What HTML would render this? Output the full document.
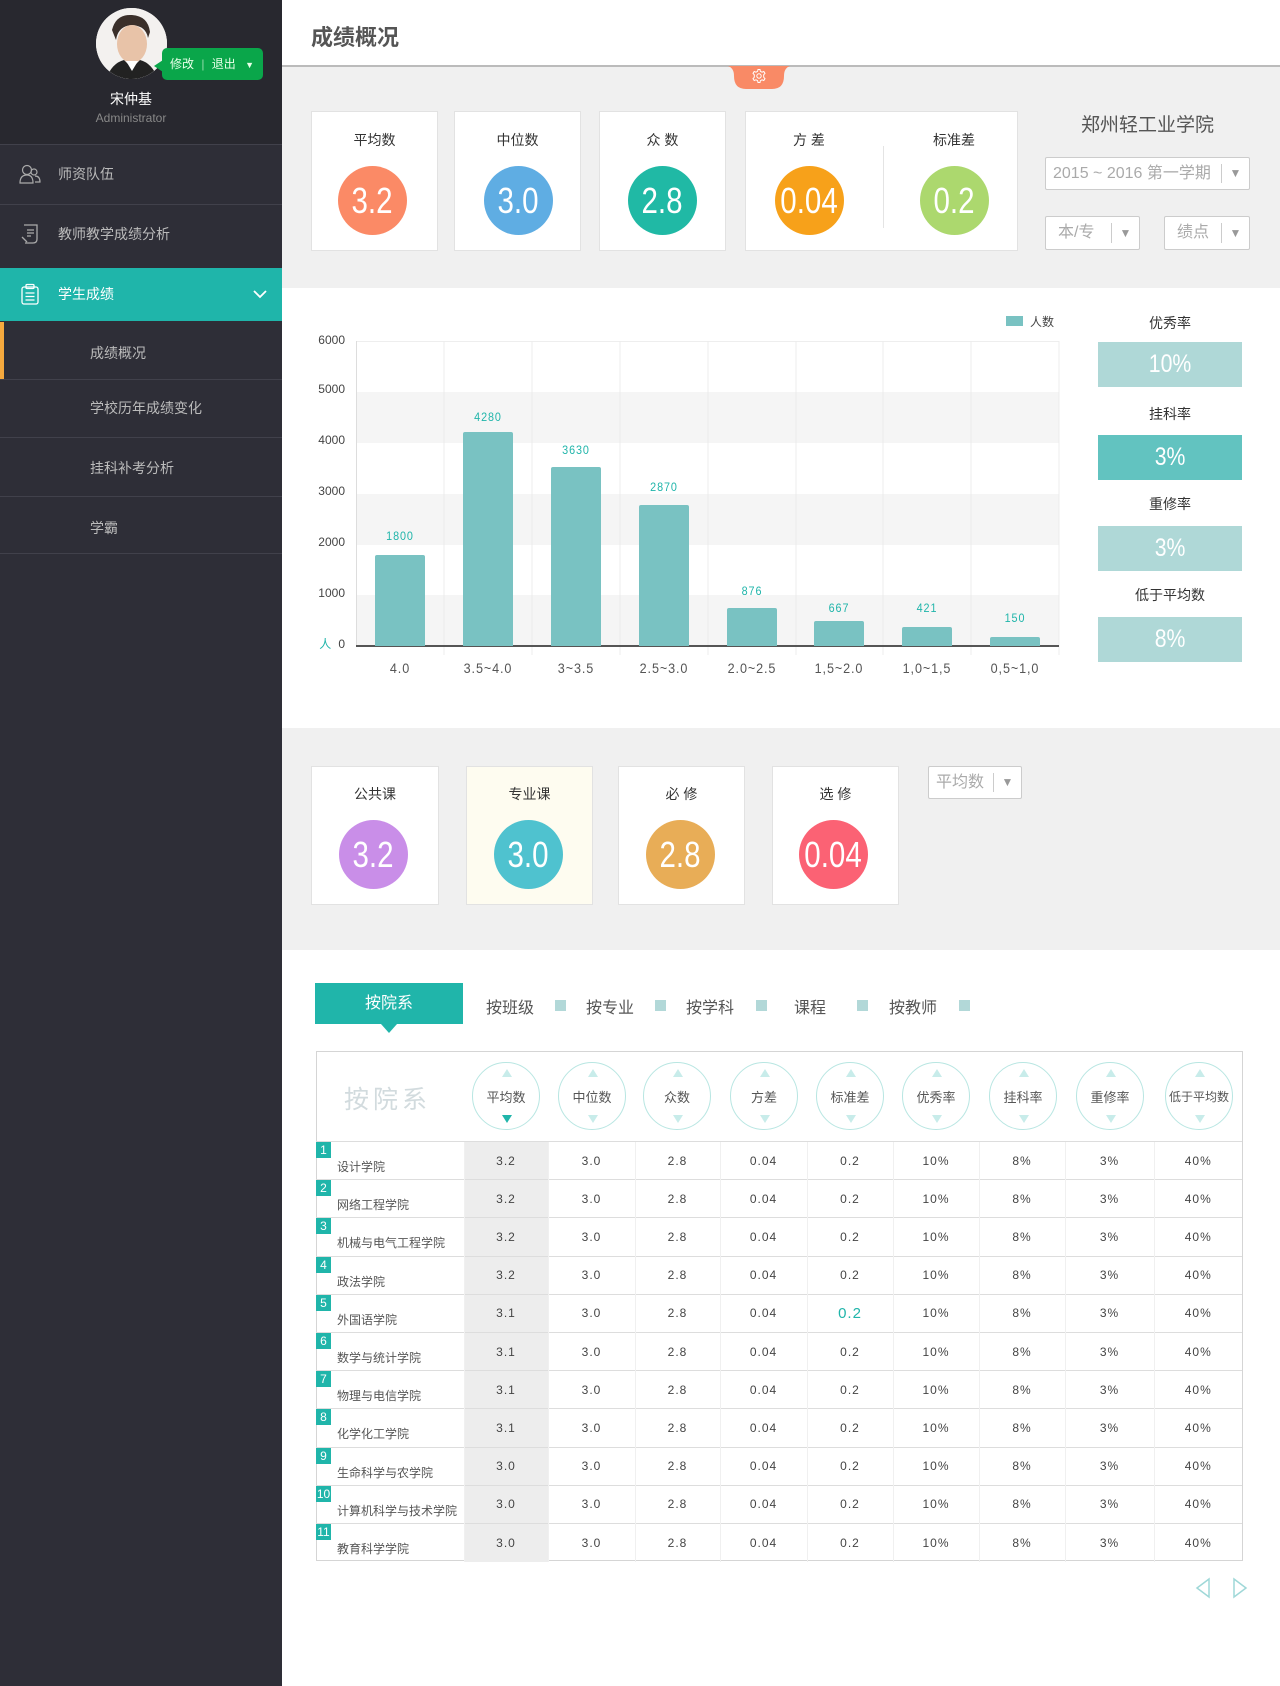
<!DOCTYPE html>
<html><head><meta charset="utf-8">
<style>
*{margin:0;padding:0;box-sizing:border-box}
body{width:1280px;height:1686px;position:relative;background:#fff;font-family:"Liberation Sans","Noto Sans CJK SC",sans-serif;color:#444;overflow:hidden}
.a{position:absolute}
.c{text-align:center}
.sb{left:0;top:0;width:282px;height:1686px;background:#2e2e37}
.num{color:#fff;font-size:36px;display:flex;align-items:center;justify-content:center;border-radius:50%}
.num span{display:inline-block;transform:scaleX(.82);font-family:"Liberation Sans",sans-serif}
.card{background:#fff;border:1px solid #e2e2e2}
.lbl{font-size:14px;color:#333;width:100%;text-align:center}
.sel{background:#fff;border:1px solid #ccc;border-radius:2px;color:#aaa;font-size:16px}
.sel .ar{position:absolute;right:0;top:6px;bottom:6px;width:28px;border-left:1px solid #ccc;color:#999;font-size:12px;display:flex;align-items:center;justify-content:center}
.menu{left:58px;font-size:14px;color:#bbb}
.ln{left:0;width:282px;height:1px;background:#41414b}
.yl{font-size:12px;color:#444;width:40px;text-align:right;left:305px}
.bar{background:#79c2c2;width:50px;border-radius:2px 2px 0 0}
.bv{font-size:12px;color:#20b5aa;width:80px;text-align:center;letter-spacing:1px;transform:scaleX(.9)}
.xl{font-size:14px;color:#555;width:88px;text-align:center;top:660px;letter-spacing:1px;transform:scaleX(.9)}
.rt{left:1098px;width:144px;text-align:center;font-size:14px;color:#333}
.rb{left:1098px;width:144px;height:45px;color:#fff;font-size:25px;display:flex;align-items:center;justify-content:center}
.rb span{display:inline-block;transform:scaleX(.85)}
.tab{font-size:16px;color:#555;top:994px}
.sq{width:11px;height:11px;background:#b2d8d8;top:1000px}
.hc{width:68px;height:68px;border:1px solid #b8e6e2;border-radius:50%;top:1062px;font-size:13px;color:#555;display:flex;align-items:center;justify-content:center}
.hc:before{content:"";position:absolute;top:6px;left:29px;border:5px solid transparent;border-bottom:8px solid #c8ecea;border-top:0}
.hc:after{content:"";position:absolute;bottom:6px;left:29px;border:5px solid transparent;border-top:8px solid #c8ecea;border-bottom:0}
.hc.on:after{border-top-color:#20b5aa}
table{border-collapse:collapse;position:absolute;left:316px;top:1141px;width:926px}
td{height:38.2px;border-top:1px solid #ddd;border-left:1px solid #f0f0f0;font-size:12px;color:#444;text-align:center;letter-spacing:1px;padding:0}
td.n{text-align:left;position:relative;border-left:0;letter-spacing:0;color:#555}
td.n b{position:absolute;left:0;top:0;background:#20b5aa;color:#fff;font-weight:normal;font-size:12px;min-width:15px;height:16px;line-height:16px;text-align:center}
td.n span{position:absolute;left:21px;top:16px;font-size:12px}
td.g{background:#ededed}
</style></head><body>

<div class="a sb"></div>
<div class="a" style="left:0;top:0;width:282px;height:144px;background:#28282f"></div>
<div class="a" style="left:96px;top:8px;width:71px;height:71px;border-radius:50%;background:#fff;overflow:hidden">
<svg width="71" height="71" viewBox="0 0 71 71"><rect width="71" height="71" fill="#f3f1ef"/><path d="M16 22 Q20 6 36 7 Q52 8 54 24 L52 30 Q50 18 36 17 Q22 18 20 32Z" fill="#3a2f2a"/><ellipse cx="36" cy="36" rx="15" ry="19" fill="#e8c3a8"/><path d="M10 71 Q16 55 28 52 L36 60 L44 52 Q56 55 62 71Z" fill="#222"/><path d="M30 53 L36 63 L42 53Z" fill="#fff"/></svg></div>
<div class="a" style="left:162px;top:48px;width:101px;height:32px;background:#0aa64a;border-radius:5px;color:#e8ffe8;font-size:12px;line-height:32px;padding-left:8px">修改 <span style="opacity:.6;margin:0 4px">|</span> 退出 <span style="font-size:9px;margin-left:6px">▼</span></div>
<div class="a" style="left:154px;top:60px;border:6px solid transparent;border-right:9px solid #0aa64a;border-left:0"></div>
<div class="a c" style="left:0;width:262px;top:89px;font-size:14px;color:#fff">宋仲基</div>
<div class="a c" style="left:0;width:262px;top:111px;font-size:12px;color:#888">Administrator</div>

<div class="a ln" style="top:144px"></div>
<svg class="a" style="left:19px;top:163px" width="22" height="22" viewBox="0 0 22 22" fill="none" stroke="#aaa" stroke-width="1.2"><circle cx="8" cy="7" r="4.5"/><path d="M1 20 Q1 12 8 12 Q14 12 14 20Z"/><circle cx="15" cy="9" r="3"/><path d="M16 13 Q21 13 21 19 L16 19"/></svg>
<div class="a menu" style="top:164px">师资队伍</div>
<div class="a ln" style="top:204px"></div>
<svg class="a" style="left:20px;top:223px" width="20" height="22" viewBox="0 0 20 22" fill="none" stroke="#aaa" stroke-width="1.3"><path d="M4 2 H17 V16 Q17 20 13 20 H5"/><path d="M7 7 H14 M7 10 H14 M7 13 H11"/><path d="M2 14 L7 19"/></svg>
<div class="a menu" style="top:224px">教师教学成绩分析</div>

<div class="a" style="left:0;top:268px;width:282px;height:53px;background:#1fb5aa"></div>
<svg class="a" style="left:20px;top:283px" width="20" height="22" viewBox="0 0 20 22" fill="none" stroke="#fff" stroke-width="1.3"><rect x="2" y="4" width="16" height="17" rx="2"/><rect x="6" y="1.5" width="8" height="4" rx="1"/><path d="M5.5 10 H14.5 M5.5 13.5 H14.5 M5.5 17 H14.5"/></svg>
<div class="a" style="left:58px;top:284px;font-size:14px;color:#fff">学生成绩</div>
<svg class="a" style="left:253px;top:289px" width="14" height="10" viewBox="0 0 14 10" fill="none" stroke="#fff" stroke-width="1.8"><path d="M1 2 L7 8 L13 2"/></svg>

<div class="a" style="left:0;top:322px;width:4px;height:57px;background:#f5a93e"></div>
<div class="a menu" style="left:90px;top:343px;font-size:14px">成绩概况</div>
<div class="a ln" style="top:379px"></div>
<div class="a menu" style="left:90px;top:398px">学校历年成绩变化</div>
<div class="a ln" style="top:437px"></div>
<div class="a menu" style="left:90px;top:458px">挂科补考分析</div>
<div class="a ln" style="top:496px"></div>
<div class="a menu" style="left:90px;top:518px">学霸</div>
<div class="a ln" style="top:553px"></div>

<!-- header -->
<div class="a" style="left:311px;top:20px;font-size:22px;font-weight:bold;color:#555">成绩概况</div>
<div class="a" style="left:282px;top:65px;width:998px;height:223px;background:#f0f0f0;border-top:2px solid #bbb"></div>
<svg class="a" style="left:728px;top:66px" width="62" height="24" viewBox="0 0 62 24"><path d="M0 0 H62 Q56 2 56 10 Q56 23 44 23 H18 Q6 23 6 10 Q6 2 0 0Z" fill="#f98a66"/></svg>
<svg class="a" style="left:751px;top:68px" width="16" height="16" viewBox="0 0 16 16" fill="none" stroke="#fff" stroke-width="1"><circle cx="8" cy="8" r="2.2"/><path d="M7 1.5 H9 L9.4 3.3 L11 4.2 L12.8 3.5 L14 5.3 L12.7 6.8 V9.2 L14 10.7 L12.8 12.5 L11 11.8 L9.4 12.7 L9 14.5 H7 L6.6 12.7 L5 11.8 L3.2 12.5 L2 10.7 L3.3 9.2 V6.8 L2 5.3 L3.2 3.5 L5 4.2 L6.6 3.3Z"/></svg>

<div class="a card" style="left:311px;top:111px;width:127px;height:140px"></div>
<div class="a card" style="left:454px;top:111px;width:127px;height:140px"></div>
<div class="a card" style="left:599px;top:111px;width:127px;height:140px"></div>
<div class="a card" style="left:745px;top:111px;width:273px;height:140px"></div>
<div class="a" style="left:883px;top:146px;width:1px;height:82px;background:#e4e4e4"></div>
<div class="a lbl" style="left:311px;width:127px;top:130px">平均数</div>
<div class="a lbl" style="left:454px;width:127px;top:130px">中位数</div>
<div class="a lbl" style="left:599px;width:127px;top:130px">众 数</div>
<div class="a lbl" style="left:745px;width:128px;top:130px">方 差</div>
<div class="a lbl" style="left:890px;width:128px;top:130px">标准差</div>
<div class="a num" style="left:338px;top:166px;width:69px;height:69px;background:#fb8a66"><span>3.2</span></div>
<div class="a num" style="left:484px;top:166px;width:69px;height:69px;background:#5fade3"><span>3.0</span></div>
<div class="a num" style="left:628px;top:166px;width:69px;height:69px;background:#20b9a5"><span>2.8</span></div>
<div class="a num" style="left:775px;top:166px;width:69px;height:69px;background:#f7a11a"><span>0.04</span></div>
<div class="a num" style="left:920px;top:166px;width:69px;height:69px;background:#acd86e"><span>0.2</span></div>

<div class="a c" style="left:1045px;width:205px;top:110px;font-size:19px;color:#555">郑州轻工业学院</div>
<div class="a sel" style="left:1045px;top:157px;width:205px;height:33px;line-height:31px;padding-left:7px">2015 ~ 2016 第一学期<span class="ar">▼</span></div>
<div class="a sel" style="left:1045px;top:216px;width:95px;height:34px;line-height:32px;padding-left:12px">本/专<span class="ar">▼</span></div>
<div class="a sel" style="left:1164px;top:216px;width:86px;height:34px;line-height:32px;padding-left:12px">绩点<span class="ar">▼</span></div>

<!-- chart -->
<div class="a" style="left:356px;top:392px;width:703px;height:51px;background:#f5f5f5"></div>
<div class="a" style="left:356px;top:494px;width:703px;height:51px;background:#f5f5f5"></div>
<div class="a" style="left:356px;top:595px;width:703px;height:51px;background:#f5f5f5"></div>
<div class="a" style="left:356px;top:341px;width:703px;height:1px;background:#eee"></div>
<svg class="a" style="left:356px;top:341px" width="704" height="315"><g stroke="#ececec"><line x1="88" y1="0" x2="88" y2="314"/><line x1="176" y1="0" x2="176" y2="314"/><line x1="264" y1="0" x2="264" y2="314"/><line x1="352" y1="0" x2="352" y2="314"/><line x1="440" y1="0" x2="440" y2="314"/><line x1="527" y1="0" x2="527" y2="314"/><line x1="615" y1="0" x2="615" y2="314"/><line x1="703" y1="0" x2="703" y2="314"/></g></svg>
<div class="a" style="left:356px;top:341px;width:1px;height:305px;background:#ddd"></div>
<div class="a" style="left:356px;top:645px;width:703px;height:2px;background:#555"></div>
<div class="a yl" style="top:333px">6000</div>
<div class="a yl" style="top:382px">5000</div>
<div class="a yl" style="top:433px">4000</div>
<div class="a yl" style="top:484px">3000</div>
<div class="a yl" style="top:535px">2000</div>
<div class="a yl" style="top:586px">1000</div>
<div class="a yl" style="top:635px"><span style="color:#20b5aa;margin-right:7px">人</span>0</div>

<div class="a bar" style="left:375px;top:555px;height:91px"></div>
<div class="a bar" style="left:463px;top:432px;height:214px"></div>
<div class="a bar" style="left:551px;top:467px;height:179px"></div>
<div class="a bar" style="left:639px;top:505px;height:141px"></div>
<div class="a bar" style="left:727px;top:608px;height:38px"></div>
<div class="a bar" style="left:814px;top:621px;height:25px"></div>
<div class="a bar" style="left:902px;top:627px;height:19px"></div>
<div class="a bar" style="left:990px;top:637px;height:9px"></div>
<div class="a bv" style="left:360px;top:529px">1800</div>
<div class="a bv" style="left:448px;top:410px">4280</div>
<div class="a bv" style="left:536px;top:443px">3630</div>
<div class="a bv" style="left:624px;top:480px">2870</div>
<div class="a bv" style="left:712px;top:584px">876</div>
<div class="a bv" style="left:799px;top:601px">667</div>
<div class="a bv" style="left:887px;top:601px">421</div>
<div class="a bv" style="left:975px;top:611px">150</div>
<div class="a xl" style="left:356px">4.0</div>
<div class="a xl" style="left:444px">3.5~4.0</div>
<div class="a xl" style="left:532px">3~3.5</div>
<div class="a xl" style="left:620px">2.5~3.0</div>
<div class="a xl" style="left:708px">2.0~2.5</div>
<div class="a xl" style="left:795px">1,5~2.0</div>
<div class="a xl" style="left:883px">1,0~1,5</div>
<div class="a xl" style="left:971px">0,5~1,0</div>
<div class="a" style="left:1006px;top:316px;width:17px;height:10px;background:#79c2c2"></div>
<div class="a" style="left:1030px;top:313px;font-size:12px;color:#444">人数</div>

<div class="a rt" style="top:313px">优秀率</div>
<div class="a rb" style="top:342px;background:#afd8d7"><span>10%</span></div>
<div class="a rt" style="top:404px">挂科率</div>
<div class="a rb" style="top:435px;background:#62c3c0"><span>3%</span></div>
<div class="a rt" style="top:494px">重修率</div>
<div class="a rb" style="top:526px;background:#afd8d7"><span>3%</span></div>
<div class="a rt" style="top:585px">低于平均数</div>
<div class="a rb" style="top:617px;background:#afd8d7"><span>8%</span></div>

<!-- section 3 -->
<div class="a" style="left:282px;top:728px;width:998px;height:222px;background:#f0f0f0"></div>
<div class="a card" style="left:311px;top:766px;width:128px;height:139px"></div>
<div class="a card" style="left:466px;top:766px;width:127px;height:139px;background:#fefcf0"></div>
<div class="a card" style="left:618px;top:766px;width:127px;height:139px"></div>
<div class="a card" style="left:772px;top:766px;width:127px;height:139px"></div>
<div class="a lbl" style="left:311px;width:128px;top:784px">公共课</div>
<div class="a lbl" style="left:466px;width:127px;top:784px">专业课</div>
<div class="a lbl" style="left:618px;width:127px;top:784px">必 修</div>
<div class="a lbl" style="left:772px;width:127px;top:784px">选 修</div>
<div class="a num" style="left:339px;top:820px;width:69px;height:69px;background:#c98ee8"><span>3.2</span></div>
<div class="a num" style="left:494px;top:820px;width:69px;height:69px;background:#4fc2cf"><span>3.0</span></div>
<div class="a num" style="left:646px;top:820px;width:69px;height:69px;background:#e8ad57"><span>2.8</span></div>
<div class="a num" style="left:799px;top:820px;width:69px;height:69px;background:#fb6274"><span>0.04</span></div>
<div class="a sel" style="left:928px;top:766px;width:94px;height:33px;line-height:31px;padding-left:7px">平均数<span class="ar">▼</span></div>

<!-- tabs -->
<div class="a" style="left:315px;top:983px;width:148px;height:41px;background:#20b5aa;color:#fff;font-size:16px;line-height:41px;text-align:center">按院系</div>
<div class="a" style="left:381px;top:1024px;border:8px solid transparent;border-top:9px solid #20b5aa;border-bottom:0"></div>
<div class="a tab" style="left:486px">按班级</div><div class="a sq" style="left:555px"></div>
<div class="a tab" style="left:586px">按专业</div><div class="a sq" style="left:655px"></div>
<div class="a tab" style="left:686px">按学科</div><div class="a sq" style="left:756px"></div>
<div class="a tab" style="left:794px">课程</div><div class="a sq" style="left:857px"></div>
<div class="a tab" style="left:889px">按教师</div><div class="a sq" style="left:959px"></div>

<!-- table -->
<div class="a" style="left:316px;top:1051px;width:927px;height:510px;border:1px solid #d5d5d5"></div>
<div class="a" style="left:344px;top:1080px;font-size:25px;color:#d2dbde;letter-spacing:4px">按院系</div>
<div class="a hc on" style="left:472px">平均数</div>
<div class="a hc" style="left:558px">中位数</div>
<div class="a hc" style="left:643px">众数</div>
<div class="a hc" style="left:730px">方差</div>
<div class="a hc" style="left:816px">标准差</div>
<div class="a hc" style="left:902px">优秀率</div>
<div class="a hc" style="left:989px">挂科率</div>
<div class="a hc" style="left:1076px">重修率</div>
<div class="a hc" style="left:1165px;font-size:12px">低于平均数</div>
<table>
<colgroup><col style="width:148px"><col style="width:84px"><col style="width:87px"><col style="width:85px"><col style="width:87px"><col style="width:86px"><col style="width:86px"><col style="width:86px"><col style="width:89px"><col style="width:88px"></colgroup>
<tr><td class="n"><b>1</b><span>设计学院</span></td><td class="g">3.2</td><td>3.0</td><td>2.8</td><td>0.04</td><td>0.2</td><td>10%</td><td>8%</td><td>3%</td><td>40%</td></tr>
<tr><td class="n"><b>2</b><span>网络工程学院</span></td><td class="g">3.2</td><td>3.0</td><td>2.8</td><td>0.04</td><td>0.2</td><td>10%</td><td>8%</td><td>3%</td><td>40%</td></tr>
<tr><td class="n"><b>3</b><span>机械与电气工程学院</span></td><td class="g">3.2</td><td>3.0</td><td>2.8</td><td>0.04</td><td>0.2</td><td>10%</td><td>8%</td><td>3%</td><td>40%</td></tr>
<tr><td class="n"><b>4</b><span>政法学院</span></td><td class="g">3.2</td><td>3.0</td><td>2.8</td><td>0.04</td><td>0.2</td><td>10%</td><td>8%</td><td>3%</td><td>40%</td></tr>
<tr><td class="n"><b>5</b><span>外国语学院</span></td><td class="g">3.1</td><td>3.0</td><td>2.8</td><td>0.04</td><td style="color:#20b5aa;font-size:15px">0.2</td><td>10%</td><td>8%</td><td>3%</td><td>40%</td></tr>
<tr><td class="n"><b>6</b><span>数学与统计学院</span></td><td class="g">3.1</td><td>3.0</td><td>2.8</td><td>0.04</td><td>0.2</td><td>10%</td><td>8%</td><td>3%</td><td>40%</td></tr>
<tr><td class="n"><b>7</b><span>物理与电信学院</span></td><td class="g">3.1</td><td>3.0</td><td>2.8</td><td>0.04</td><td>0.2</td><td>10%</td><td>8%</td><td>3%</td><td>40%</td></tr>
<tr><td class="n"><b>8</b><span>化学化工学院</span></td><td class="g">3.1</td><td>3.0</td><td>2.8</td><td>0.04</td><td>0.2</td><td>10%</td><td>8%</td><td>3%</td><td>40%</td></tr>
<tr><td class="n"><b>9</b><span>生命科学与农学院</span></td><td class="g">3.0</td><td>3.0</td><td>2.8</td><td>0.04</td><td>0.2</td><td>10%</td><td>8%</td><td>3%</td><td>40%</td></tr>
<tr><td class="n"><b>10</b><span>计算机科学与技术学院</span></td><td class="g">3.0</td><td>3.0</td><td>2.8</td><td>0.04</td><td>0.2</td><td>10%</td><td>8%</td><td>3%</td><td>40%</td></tr>
<tr><td class="n"><b>11</b><span>教育科学学院</span></td><td class="g">3.0</td><td>3.0</td><td>2.8</td><td>0.04</td><td>0.2</td><td>10%</td><td>8%</td><td>3%</td><td>40%</td></tr>
</table>
<svg class="a" style="left:1194px;top:1577px" width="56" height="22" viewBox="0 0 56 22" fill="none" stroke="#9fd8d8" stroke-width="1.5"><path d="M15 2 L3 11 L15 20Z"/><path d="M40 2 L52 11 L40 20Z"/></svg>
</body></html>
